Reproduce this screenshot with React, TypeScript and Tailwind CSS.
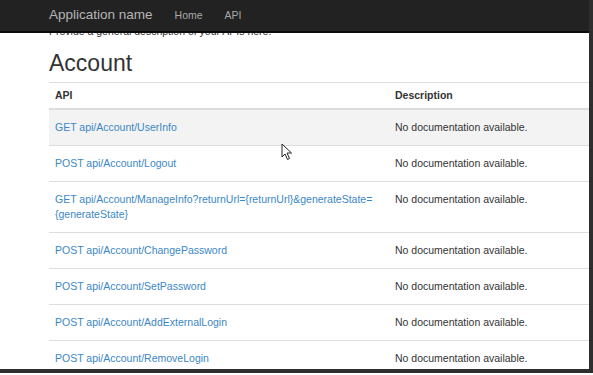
import React from "react";

const endpoints = [
    { api: "GET api/Account/UserInfo" },
    { api: "POST api/Account/Logout" },
    { api: "GET api/Account/ManageInfo?returnUrl={returnUrl}&generateState=", wrap: "{generateState}" },
    { api: "POST api/Account/ChangePassword" },
    { api: "POST api/Account/SetPassword" },
    { api: "POST api/Account/AddExternalLogin" },
    { api: "POST api/Account/RemoveLogin" },
];

const Cursor = () => (
    <svg className="absolute left-[281px] top-[143px]" width="12" height="18" viewBox="0 0 12 18">
        <path d="M1 1 L1 14 L4 11 L6.5 16.5 L8.5 15.5 L6 10 L10.5 10 Z" fill="#fff" stroke="#222" strokeWidth="1" strokeLinejoin="round" />
    </svg>
);

export default function App() {
    return (
        <div className="w-[593px] h-[375px] bg-white overflow-hidden font-['Liberation_Sans',Arial,sans-serif]">
            <div className="relative w-[593px] h-[373px] border-r-[4px] border-b-[4px] border-[#2e2e2e] overflow-hidden bg-white">
                {/* Navbar */}
                <nav className="relative z-10 h-[33px] bg-[#222222] border-b-[2px] border-[#0b0b0b] flex items-center pl-[49px]">
                    <span className="text-[13.5px] text-[#b5b5b5] mr-[22px]">Application name</span>
                    <span className="text-[10.5px] text-[#a8a8a8] mr-[22px]">Home</span>
                    <span className="text-[10.5px] text-[#a8a8a8]">API</span>
                </nav>

                <div className="pl-[49px]">
                    <p className="-mt-[9px] text-[10.5px] leading-[15px] text-[#333]">
                        Provide a general description of your APIs here.
                    </p>
                    <h2 className="mt-[10px] text-[23px] leading-[28px] text-[#333]">Account</h2>

                    <div className="mt-[5px] w-[540px] overflow-hidden">
                        <table className="w-[560px] border-collapse text-[10.5px] leading-[15px] text-[#333]">
                            <thead>
                                <tr className="border-t border-[#dddddd] border-b-[2px]">
                                    <th className="w-[340px] text-left font-bold px-[6px] py-[5px]">API</th>
                                    <th className="text-left font-bold px-[6px] py-[5px]">Description</th>
                                </tr>
                            </thead>
                            <tbody>
                                {endpoints.map((e, i) => (
                                    <tr key={i} className={`border-t border-[#dddddd] ${i === 0 ? "bg-[#f3f3f3]" : ""}`}>
                                        <td className="align-top px-[6px] py-[10px] text-[#3b87c6]">
                                            {e.api}
                                            {e.wrap && (
                                                <>
                                                    <br />
                                                    {e.wrap}
                                                </>
                                            )}
                                        </td>
                                        <td className="align-top px-[6px] py-[10px]">No documentation available.</td>
                                    </tr>
                                ))}
                            </tbody>
                        </table>
                    </div>
                </div>

                <Cursor />
            </div>
        </div>
    );
}
